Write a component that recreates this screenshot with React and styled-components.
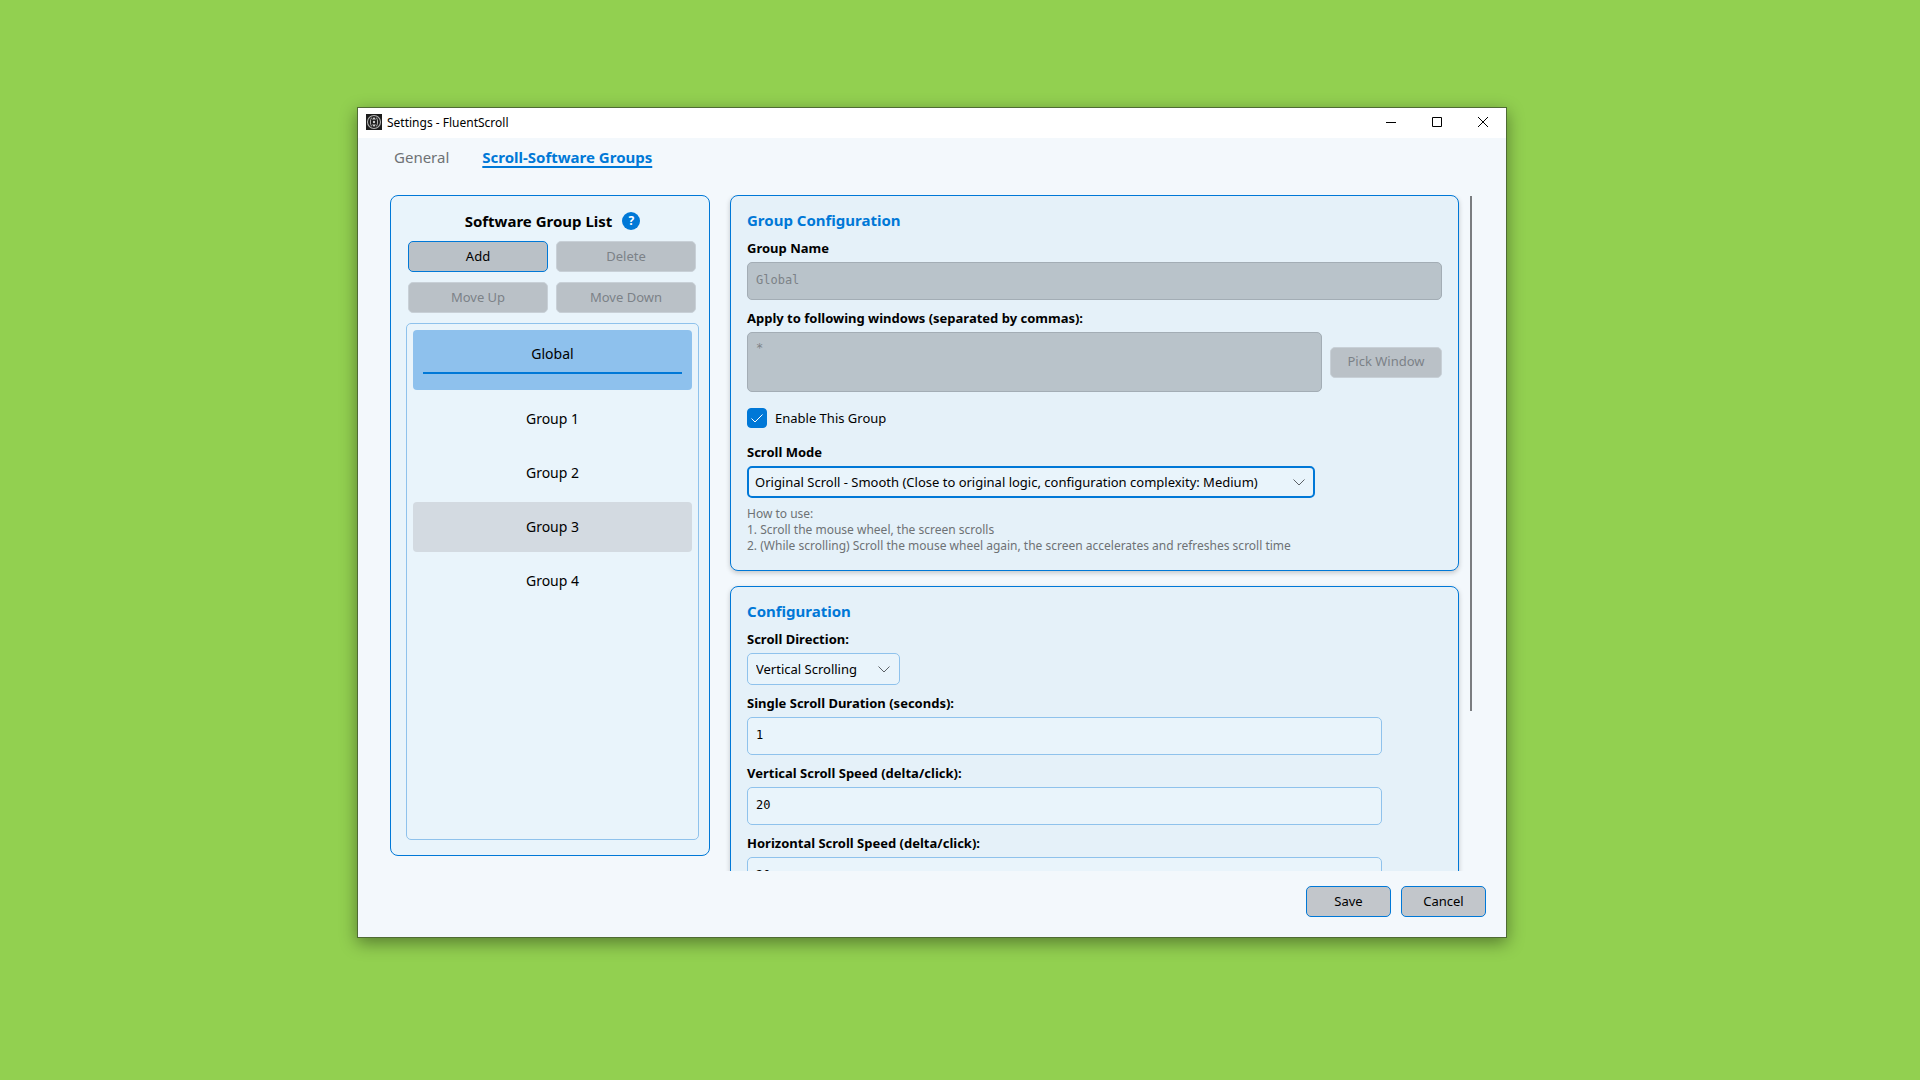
import React, { useState } from "react";
import styled, { createGlobalStyle } from "styled-components";

const groups = ["Global", "Group 1", "Group 2", "Group 3", "Group 4"];

const numberFields = [
  { id: "duration", label: "Single Scroll Duration (seconds):", value: "1" },
  { id: "vertical", label: "Vertical Scroll Speed (delta/click):", value: "20" },
  { id: "horizontal", label: "Horizontal Scroll Speed (delta/click):", value: "20" },
];

const AppIcon = () => (
  <svg width="16" height="16" viewBox="0 0 16 16" aria-hidden="true">
    <rect width="16" height="16" fill="#1c1c1c" />
    <g fill="none" stroke="#b4b4b4">
      <circle cx="8" cy="8" r="6.5" strokeWidth="1.1" />
      <path d="M5.6 3.6C4 5.6 4 10.4 5.6 12.4M10.4 3.6c1.6 2 1.6 6.8 0 8.8" />
    </g>
    <g fill="#d0d0d0">
      <circle cx="8" cy="8" r="1.2" />
      <path d="M8 3 10 5.6H6zM8 13l2-2.6H6z" />
    </g>
  </svg>
);

const Chevron = () => (
  <svg width="12" height="7" viewBox="0 0 12 7" aria-hidden="true">
    <path d="M0.5 0.5 6 6 11.5 0.5" fill="none" stroke="#5c6166" />
  </svg>
);

const App = () => {
  const [selected, setSelected] = useState("Global");
  const [enabled, setEnabled] = useState(true);

  return (
    <Desktop>
      <GlobalStyle />
      <Window>
        <TitleBar>
          <AppIcon />
          <WindowTitle>Settings - FluentScroll</WindowTitle>
          <CaptionButton aria-label="Minimize">
            <svg width="10" height="10">
              <path d="M0 5.5h10" stroke="#000" />
            </svg>
          </CaptionButton>
          <CaptionButton aria-label="Maximize">
            <svg width="10" height="10">
              <path d="M0.5 0.5h9v9h-9z" stroke="#000" fill="none" />
            </svg>
          </CaptionButton>
          <CaptionButton aria-label="Close">
            <svg width="10" height="10">
              <path d="M0 0 10 10M10 0 0 10" stroke="#000" />
            </svg>
          </CaptionButton>
        </TitleBar>

        <Tabs>
          <Tab href="#general">General</Tab>
          <Tab href="#groups" $active>
            Scroll-Software Groups
          </Tab>
        </Tabs>

        <Content>
          <GroupPanel>
            <PanelHeader>
              <PanelTitle>Software Group List</PanelTitle>
              <HelpButton aria-label="Help">?</HelpButton>
            </PanelHeader>
            <ButtonGrid>
              <Button>Add</Button>
              <Button disabled>Delete</Button>
              <Button disabled>Move Up</Button>
              <Button disabled>Move Down</Button>
            </ButtonGrid>
            <GroupList>
              {groups.map((name) => (
                <li key={name}>
                  <GroupItem
                    $selected={name === selected}
                    $hovered={name === "Group 3"}
                    onClick={() => setSelected(name)}
                  >
                    {name}
                  </GroupItem>
                </li>
              ))}
            </GroupList>
          </GroupPanel>

          <ScrollArea>
            <Cards>
              <Card>
                <CardTitle>Group Configuration</CardTitle>
                <Label htmlFor="name">Group Name</Label>
                <TextInput id="name" defaultValue="Global" disabled />
                <Label htmlFor="windows" $spaced>
                  Apply to following windows (separated by commas):
                </Label>
                <WindowsRow>
                  <TextArea id="windows" defaultValue="*" disabled />
                  <PickButton disabled>Pick Window</PickButton>
                </WindowsRow>
                <CheckLabel>
                  <CheckBox
                    type="checkbox"
                    checked={enabled}
                    onChange={(e) => setEnabled(e.target.checked)}
                  />
                  <CheckMark width="12" height="9" viewBox="0 0 12 9">
                    <path d="M0.5 4.5 4 8 11.5 0.5" fill="none" stroke="#fff" />
                  </CheckMark>
                  Enable This Group
                </CheckLabel>
                <Label htmlFor="mode">Scroll Mode</Label>
                <SelectWrapper $width="568px">
                  <Select id="mode" $focused>
                    <option>
                      Original Scroll - Smooth (Close to original logic,
                      configuration complexity: Medium)
                    </option>
                  </Select>
                  <Chevron />
                </SelectWrapper>
                <HelpText>
                  How to use:
                  <br />
                  1. Scroll the mouse wheel, the screen scrolls
                  <br />
                  2. (While scrolling) Scroll the mouse wheel again, the screen
                  accelerates and refreshes scroll time
                </HelpText>
              </Card>

              <Card>
                <CardTitle>Configuration</CardTitle>
                <Label htmlFor="direction">Scroll Direction:</Label>
                <SelectWrapper $width="153px">
                  <Select id="direction">
                    <option>Vertical Scrolling</option>
                  </Select>
                  <Chevron />
                </SelectWrapper>
                <Fields>
                  {numberFields.map((field) => (
                    <React.Fragment key={field.id}>
                      <Label htmlFor={field.id} $spaced>
                        {field.label}
                      </Label>
                      <TextInput id={field.id} defaultValue={field.value} />
                    </React.Fragment>
                  ))}
                </Fields>
              </Card>
            </Cards>
            <ScrollTrack>
              <ScrollThumb />
            </ScrollTrack>
          </ScrollArea>
        </Content>

        <Footer>
          <FooterButton>Save</FooterButton>
          <FooterButton>Cancel</FooterButton>
        </Footer>
      </Window>
    </Desktop>
  );
};

const GlobalStyle = createGlobalStyle`
  * {
    box-sizing: border-box;
  }

  body {
    margin: 0;
    font-family: "Noto Sans", "Open Sans", sans-serif;
    font-size: 13px;
    color: #000;
  }

  button,
  select {
    font: inherit;
    color: inherit;
  }
`;

const Desktop = styled.div`
  display: flex;
  height: 100vh;
  padding: 107px 413px 142px 357px;
  background: #92d050;
`;

const Window = styled.main`
  display: flex;
  flex: 1;
  flex-direction: column;
  min-width: 0;
  border: 1px solid #4f6b34;
  background: #f3f8fc;
  box-shadow: 0 5px 16px rgba(0, 0, 0, 0.4);
`;

const TitleBar = styled.header`
  display: flex;
  align-items: center;
  flex-shrink: 0;
  height: 30px;
  padding: 0 0 2px 8px;
  background: #fff;
`;

const WindowTitle = styled.span`
  flex: 1;
  padding-left: 5px;
  font-size: 12px;
`;

const CaptionButton = styled.button`
  display: flex;
  align-items: center;
  justify-content: center;
  width: 46px;
  height: 28px;
  padding: 0;
  border: none;
  background: none;
`;

const Tabs = styled.nav`
  display: flex;
  align-items: flex-start;
  flex-shrink: 0;
  gap: 33px;
  height: 57px;
  padding: 9px 36px;
`;

const Tab = styled.a`
  font-size: 15px;
  font-weight: ${(props) => (props.$active ? 700 : 400)};
  line-height: 21px;
  color: ${(props) => (props.$active ? "#0078d7" : "#6e7275")};
  text-decoration: ${(props) => (props.$active ? "underline 2px" : "none")};
  text-decoration-skip-ink: none;
  text-underline-offset: 3px;
`;

const Content = styled.div`
  display: flex;
  flex: 1;
  gap: 14px;
  min-height: 0;
  padding: 0 34px 0 32px;
`;

const GroupPanel = styled.section`
  display: flex;
  flex-direction: column;
  width: 320px;
  margin-bottom: 15px;
  padding: 12px 10px 15px 15px;
  border: 1px solid #0078d7;
  border-radius: 8px;
  background: #e9f4fb;
`;

const PanelHeader = styled.div`
  display: flex;
  align-items: center;
  justify-content: center;
  gap: 10px;
  height: 26px;
`;

const PanelTitle = styled.h2`
  margin: 0;
  font-size: 15px;
`;

const HelpButton = styled.button`
  width: 18px;
  height: 18px;
  padding: 0;
  border: none;
  border-radius: 50%;
  background: #0078d7;
  color: #fff;
  font-size: 12px;
  font-weight: 700;
  line-height: 18px;
`;

const ButtonGrid = styled.div`
  display: grid;
  grid-template-columns: 1fr 1fr;
  gap: 10px 8px;
  margin: 7px 3px 10px 2px;
`;

const Button = styled.button`
  height: 31px;
  padding: 0 12px 2px;
  border: 1px solid #0078d7;
  border-radius: 5px;
  background: #bac1c7;
  line-height: 20px;

  &:disabled {
    border-color: #c8d0d7;
    color: #7c8287;
  }
`;

const PickButton = styled(Button)`
  width: 112px;
`;

const FooterButton = styled(Button)`
  width: 85px;
  background: #c2c6cb;
`;

const GroupList = styled.ul`
  display: flex;
  flex: 1;
  flex-direction: column;
  gap: 4px;
  margin: 0;
  padding: 6px;
  border: 1px solid #8fc2ec;
  border-radius: 5px;
  list-style: none;
`;

const GroupItem = styled.button`
  display: flex;
  flex-direction: column;
  align-items: stretch;
  justify-content: center;
  width: 100%;
  height: ${(props) => (props.$selected ? 60 : 50)}px;
  padding: 0 10px ${(props) => (props.$selected ? 2 : 0)}px;
  border: none;
  border-radius: 4px;
  background: ${(props) =>
    props.$selected ? "#8ec1ed" : props.$hovered ? "#d3dae1" : "transparent"};
  font-size: 14px;
  line-height: 20px;

  &::after {
    content: "";
    display: ${(props) => (props.$selected ? "block" : "none")};
    height: 2px;
    margin-top: 8px;
    background: #0078d7;
  }
`;

const ScrollArea = styled.div`
  display: flex;
  flex: 1;
  gap: 5px;
  min-width: 0;
  overflow: hidden;
`;

const Cards = styled.div`
  flex: 1;
  min-width: 0;
  padding: 0 6px;
`;

const Card = styled.section`
  margin-bottom: 15px;
  padding: 12px 16px 16px;
  border: 1px solid #0078d7;
  border-radius: 8px;
  background: #e5f1f9;
  box-shadow: 0 2px 5px rgba(0, 0, 0, 0.2);
`;

const CardTitle = styled.h2`
  margin: 0 0 2px;
  font-size: 15px;
  line-height: 24px;
  color: #0078d7;
`;

const Label = styled.label`
  display: block;
  padding-top: ${(props) => (props.$spaced ? 4 : 0)}px;
  font-weight: 700;
  line-height: 28px;
`;

const TextInput = styled.input`
  display: block;
  width: 100%;
  height: 38px;
  padding: 4px 8px 6px;
  border: 1px solid #8fc2ec;
  border-radius: 5px;
  background: #e9f4fb;
  font-family: "DejaVu Sans Mono", monospace;
  font-size: 12px;
  color: #000;

  &:disabled {
    border-color: #a3adb5;
    background: #b9c3ca;
    color: #7c8287;
  }
`;

const TextArea = styled(TextInput).attrs({ as: "textarea" })`
  flex: 1;
  height: 60px;
  padding-top: 8px;
  resize: none;
`;

const WindowsRow = styled.div`
  display: flex;
  align-items: center;
  gap: 8px;
`;

const Fields = styled.div`
  padding-right: 60px;
`;

const CheckLabel = styled.label`
  display: grid;
  grid-template-columns: 20px 1fr;
  align-items: center;
  column-gap: 8px;
  margin: 16px 0 10px;
  line-height: 20px;
`;

const CheckBox = styled.input`
  grid-area: 1 / 1;
  width: 20px;
  height: 20px;
  margin: 0;
  border: 1px solid #0078d7;
  border-radius: 4px;
  appearance: none;

  &:checked {
    background: #0078d7;
  }
`;

const CheckMark = styled.svg`
  grid-area: 1 / 1;
  justify-self: center;
  pointer-events: none;
`;

const SelectWrapper = styled.div`
  display: grid;
  align-items: center;
  width: ${(props) => props.$width};
  max-width: 100%;

  > * {
    grid-area: 1 / 1;
  }

  svg {
    justify-self: end;
    margin-right: 10px;
    pointer-events: none;
  }
`;

const Select = styled.select`
  width: 100%;
  height: 32px;
  padding: 0 ${(props) => (props.$focused ? 6 : 8)}px;
  border: ${(props) => (props.$focused ? "2px solid #0078d7" : "1px solid #8fc2ec")};
  border-radius: 5px;
  background: #e9f4fb;
  appearance: none;
`;

const HelpText = styled.p`
  margin: 8px 0 0;
  font-size: 12px;
  line-height: 16px;
  color: #6e7275;
`;

const ScrollTrack = styled.div`
  width: 2px;
  padding-top: 1px;
`;

const ScrollThumb = styled.div`
  height: 515px;
  background: #7a7d80;
`;

const Footer = styled.footer`
  display: flex;
  justify-content: flex-end;
  flex-shrink: 0;
  gap: 10px;
  padding: 15px 20px 20px;
`;

export default App;
